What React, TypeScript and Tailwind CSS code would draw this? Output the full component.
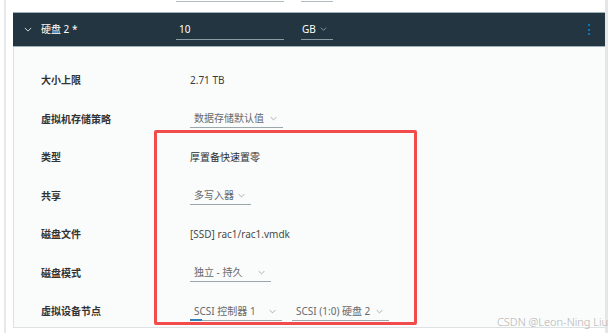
import React from "react";

const font = { fontFamily: '"Noto Sans", "Noto Sans CJK SC", sans-serif' };

const Chevron = ({ className = "" }: { className?: string }) => (
  <svg viewBox="0 0 10 6" className={className} fill="none" stroke="currentColor" strokeWidth="1">
    <path d="M1 1l4 4 4-4" />
  </svg>
);

const Select = ({ text, width, focus }: { text: string; width: string; focus?: boolean }) => (
  <div className={`relative flex items-center h-[18px] pl-[4px] border-b border-[#9ca7ab] text-[#666a6d] ${width}`}>
    <span className="whitespace-nowrap">{text}</span>
    <Chevron className="w-[7px] h-[5px] ml-auto mr-[6px] text-[#8a9195]" />
    {focus && <div className="absolute left-0 bottom-[-1px] w-[12px] h-[2px] bg-[#2f7fbf]" />}
  </div>
);

const rows: { label: string; value: React.ReactNode }[] = [
  { label: "大小上限", value: <span className="text-[#3b3b3b]">2.71 TB</span> },
  { label: "虚拟机存储策略", value: <Select text="数据存储默认值" width="w-[93px]" /> },
  { label: "类型", value: <span className="text-[#2e2e2e]">厚置备快速置零</span> },
  { label: "共享", value: <Select text="多写入器" width="w-[61px]" /> },
  { label: "磁盘文件", value: <span className="text-[#4a4a4a]">[SSD] rac1/rac1.vmdk</span> },
  { label: "磁盘模式", value: <Select text="独立 - 持久" width="w-[81px]" /> },
  {
    label: "虚拟设备节点",
    value: (
      <div className="flex gap-[10px]">
        <Select text="SCSI 控制器 1" width="w-[92px]" focus />
        <Select text="SCSI (1:0) 硬盘 2" width="w-[97px]" />
      </div>
    ),
  },
];

export default function App() {
  return (
    <div className="relative w-[614px] h-[333px] bg-white overflow-hidden flex text-[10px]" style={font}>
      {/* left gutter */}
      <div className="w-[13px] shrink-0 pl-[4px]">
        <div className="h-full border-l-2 border-[#e6e8e9]" />
      </div>

      {/* panel */}
      <div className="w-[592px] shrink-0 flex flex-col">
        <div className="h-[12px] relative">
          <div className="absolute left-[163px] top-[1px] w-[108px] border-t border-[#b3bcbf]" />
          <div className="absolute left-[288px] top-[1px] w-[32px] border-t border-[#b3bcbf]" />
        </div>

        <div className="h-[35px] bg-[#223540] border-y border-[#9fb0b7] flex items-center text-white">
          <Chevron className="w-[8px] h-[5px] ml-[11px] text-white" />
          <span className="ml-[9px] w-[135px]">硬盘 2 *</span>
          <div className="w-[108px] h-[20px] border-b border-[#8b9ca3] flex items-center pl-[3px]">10</div>
          <div className="ml-[17px] w-[32px] h-[20px] border-b border-[#8b9ca3] flex items-center pl-[1px] gap-[4px]">
            GB
            <Chevron className="w-[7px] h-[4px] text-[#b9c4c9]" />
          </div>
          <div className="ml-auto mr-[15px] flex flex-col gap-[2.5px]">
            <div className="w-[2px] h-[2px] bg-[#0a78b8]" />
            <div className="w-[2px] h-[2px] bg-[#0a78b8]" />
            <div className="w-[2px] h-[2px] bg-[#0a78b8]" />
          </div>
        </div>

        <div className="h-[281px] bg-[#fafbfb] border-l border-b border-[#dde1e3] overflow-hidden pt-[14.5px]">
          {rows.map((r) => (
            <div key={r.label} className="h-[38.5px] flex items-center">
              <span className="ml-[27px] w-[149px] font-semibold text-[#333]">{r.label}</span>
              <div>{r.value}</div>
            </div>
          ))}
        </div>
      </div>

      {/* scrollbar edge */}
      <div className="w-[3px] shrink-0 bg-[#e4e6e7]" />

      {/* annotation box */}
      <div className="absolute left-[154px] top-[130px] w-[263px] h-[195px] border-[3px] border-[#f14b4b] rounded-[2px]" />

      {/* watermark */}
      <div className="absolute left-[497px] top-[314px] text-[11px] font-light text-[#b4b4b4] whitespace-nowrap">
        CSDN @Leon-Ning Liu
      </div>
    </div>
  );
}
